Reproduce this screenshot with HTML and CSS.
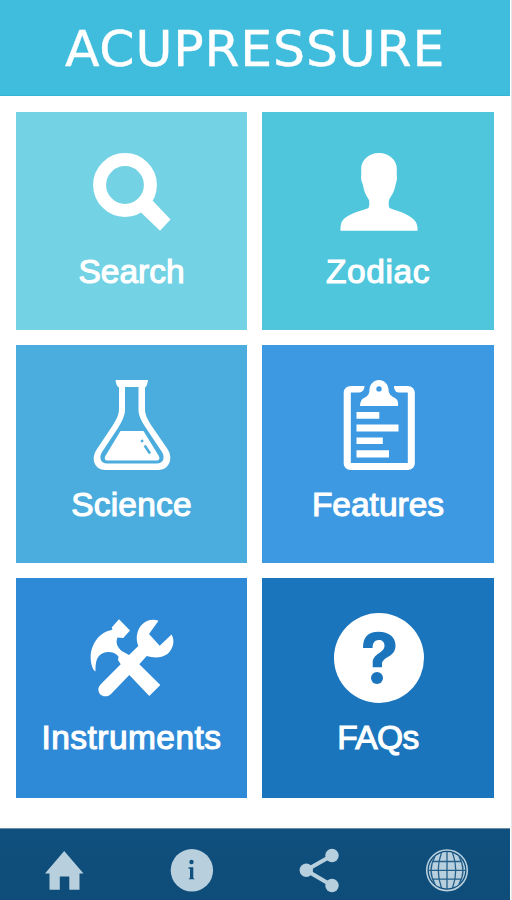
FILE: index.html
```html
<!DOCTYPE html>
<html lang="en">
<head>
<meta charset="utf-8">
<title>Acupressure</title>
<link rel="stylesheet" href="styles.css">
</head>
<body>
<div class="app">
  <header class="header"><h1 class="title">ACUPRESSURE</h1></header>
  <main class="grid">
    <a class="tile search">
      <svg class="icon" viewBox="16 112 231 140">
        <circle cx="125" cy="185" r="25.400" fill="none" stroke="#fff" stroke-width="13"/>
        <path d="M152.500 200.500 L170.500 219.500 L160 230.700 L141 212.500Z"/>
      </svg>
      <span class="label">Search</span>
    </a>
    <a class="tile zodiac">
      <svg class="icon" viewBox="262 112 232 140">
        <path d="M379 153C389 153 397 160 396.800 169V175C397.500 178 396.500 182 395.500 185C394 193 391 196 389 200C388.500 203 388.500 206 389.500 208C396 210.500 406 213 412 218C416 221 418 225 417.500 230.700H340.500C340.500 225 341 221 345 218C351 213 362 210.500 368.500 208C369.500 206 369.500 203 369 200C366 195 364 192 363 185C361.500 181 360.500 178 361.200 175V169C361 160 369 153 379 153Z"/>
      </svg>
      <span class="label">Zodiac</span>
    </a>
    <a class="tile science">
      <svg class="icon" viewBox="16 345 231 140">
        <path d="M115.500 380H148C147.500 384 146.500 386.500 145 387.500V409C145 415 148 420 151 425L167.500 449C174 459 168.500 470 158.500 470H105.500C95 470 90 459 97 449L113 425C116 420 119 415 119 409V387.500C117 386.500 116 384 115.500 380ZM125 387V410C125 416 121 423 118 428L102 452C98.500 458 101 463.500 107 463.500H157C163 463.500 165.500 458 162 452L146 428C142 422 138.500 416 138.500 410V387Z" fill-rule="evenodd"/>
        <path d="M120.500 431H143.500L158.500 455.500C160.500 459 159 460.500 156.500 460.500H107.500C104.500 460.500 104 458 106 455Z"/>
        <path d="M141.500 440L142.700 442M144.700 445.500L150 453.500" fill="none" stroke="#4badde" stroke-width="2.500"/>
      </svg>
      <span class="label">Science</span>
    </a>
    <a class="tile features">
      <svg class="icon" viewBox="262 345 232 140">
        <path d="M364.500 386H351C346.500 386 343.700 389 343.700 393V463C343.700 467 346.500 470 351 470H407.500C412 470 414.800 467 414.800 463V393C414.800 389 412 386 407.500 386H394C394 389.500 395.500 392.500 398.500 392.500H407.800V463H350.800V392.500H359C362.500 392.500 364.500 389.500 364.500 386Z"/>
        <path d="M379 380C384 380 388 384 388.500 389C388.500 394 391 396 395 398C397.500 399.500 398.500 402 398 406H360C360 402 361.500 399 364 398C368 396 369.500 394 369.500 389C370 384 374 380 379 380ZM379 386.200A2.700 2.700 0 1 0 379 391.600A2.700 2.700 0 1 0 379 386.200Z" fill-rule="evenodd"/>
        <path d="M356.500 412H379.300V418.700H356.500ZM356.500 424.500H398.500V431.500H356.500ZM356.500 437.500H382.800V444H356.500ZM356.500 450.300H389V457.500H356.500Z"/>
      </svg>
      <span class="label">Features</span>
    </a>
    <a class="tile instruments">
      <svg class="icon" viewBox="16 578 231 140">
        <path d="M119 619.300L130 630.500L123.300 638L117.500 637.500C115.500 642 117 647 121.700 651L129 655L138.300 646C135.500 639 136.500 631 141.500 625C146 620 153 618.500 158.500 620.700L149 634L159.700 645.700L171.500 634.500C175.500 641 173 649 167.500 654C161 658.500 153 658 146.700 656L139.300 664.300L160.300 685L149.300 696L129.300 675L111.500 693.500C108 697.500 102 697 99.500 693.500C97.500 690 98 687 101 684L120.700 664.300L118 660L118.500 656.500C114 651 104 650.500 99 656C95.500 660 95.500 666 95.500 671.500C91 669 90 658 91 652C93 643 98 636 104.500 632.500C107 631 110.500 630.500 112.500 629.500L111.700 627.500Z"/>
      </svg>
      <span class="label">Instruments</span>
    </a>
    <a class="tile faqs">
      <svg class="icon" viewBox="262 578 232 140">
        <circle cx="379" cy="658" r="45"/>
        <path d="M363 648C363 637 368 631.700 378.500 631.700C389 631.700 395.500 637 395.500 645.500C395.500 658 382 656 382 664.500V667.200H372.700V663C372.700 653 384.500 653.500 384.500 645.500C384.500 642 382 640 379 640C374.500 640 372.600 643 372.600 648Z" fill="#1b75bd"/>
        <circle cx="377" cy="678" r="6" fill="#1b75bd"/>
      </svg>
      <span class="label">FAQs</span>
    </a>
  </main>
  <nav class="nav">
    <a class="nav-item"><svg class="nav-icon" viewBox="40 846 48 48"><path d="M64.200 851L83.500 873.500H79.500V889.700H69.300V876.500H59.800V889.700H49.500V873.500H45Z"/></svg></a>
    <a class="nav-item"><svg class="nav-icon" viewBox="167 846 48 48"><circle cx="191.900" cy="870.300" r="21.200"/><circle cx="191.500" cy="862" r="2.200" fill="#10507e"/><path d="M188.500 867.300H193.300V877.700L194.700 879.300H188.500L190 877.700V868.700H188.500Z" fill="#10507e"/></svg></a>
    <a class="nav-item"><svg class="nav-icon" viewBox="295 846 48 48"><path d="M332 855.500L306 870.200L332 885.500" fill="none" stroke="#b8cfdd" stroke-width="4"/><circle cx="332" cy="855.500" r="6.700"/><circle cx="306.300" cy="870.200" r="6.700"/><circle cx="332" cy="885.500" r="6.700"/></svg></a>
    <a class="nav-item"><svg class="nav-icon" viewBox="422 846 48 48"><circle cx="447" cy="870.300" r="20.300" fill="none" stroke="#b8cfdd" stroke-width="1.600"/><circle cx="447" cy="870.300" r="18.200"/><path d="M447 852V889M428 870.300H466M432 861.500H462M432 879.200H462M441.500 852.500Q435 870.300 441.500 888M452.500 852.500Q459 870.300 452.500 888M435 856.500Q427 870.300 435 884M459 856.500Q467 870.300 459 884" fill="none" stroke="#24608a" stroke-width="1.300"/></svg></a>
  </nav>
</div>
</body>
</html>
```
FILE: styles.css
```css
* { box-sizing: border-box; }
body { margin: 0; background: #fff; }
.app {
  width: 512px;
  height: 900px;
  display: flex;
  flex-direction: column;
  border-right: 1px solid #e6e6e8;
  padding-right: 1px;
  overflow: hidden;
}
.header {
  height: 96px;
  flex: none;
  background: #40bddd;
  border-bottom: 1px solid #35b5d5;
}
.title {
  margin: 0;
  text-align: center;
  font: 400 50.500px/98px "DejaVu Sans", sans-serif;
  letter-spacing: 0.800px;
  -webkit-text-stroke: 0.400px #fff;
  color: #fff;
  white-space: nowrap;
}
.grid {
  flex: 1;
  display: grid;
  grid-template-columns: 231px 232px;
  grid-template-rows: 218px 218px 220px;
  gap: 15px;
  padding: 16px;
  padding-right: 0;
  align-content: start;
}
.tile {
  display: flex;
  flex-direction: column;
  align-items: center;
  color: #fff;
}
.icon { width: 100%; height: 140px; flex: none; fill: #fff; }
.label {
  font: 400 33.500px/40px "Liberation Sans", Arial, sans-serif;
  -webkit-text-stroke: 1.100px #fff;
}
.search { background: #73d2e4; }
.zodiac { background: #50c6dd; }
.zodiac .label { letter-spacing: 0.600px; }
.science { background: #4badde; }
.science .label { letter-spacing: 0.200px; }
.features { background: #3e99e3; }
.instruments { background: #2e8ad7; }
.instruments .label { letter-spacing: 0.450px; }
.faqs { background: #1b75bd; }
.faqs .label { letter-spacing: -0.600px; }
.nav {
  height: 72px;
  flex: none;
  display: flex;
  border-top: 1px solid #6c8ba5;
  background: linear-gradient(#10507e, #0e4c79);
}
.nav-item { width: 127.500px; display: flex; justify-content: center; padding-top: 17px; }
.nav-icon { width: 48px; height: 48px; fill: #b8cfdd; }
```
